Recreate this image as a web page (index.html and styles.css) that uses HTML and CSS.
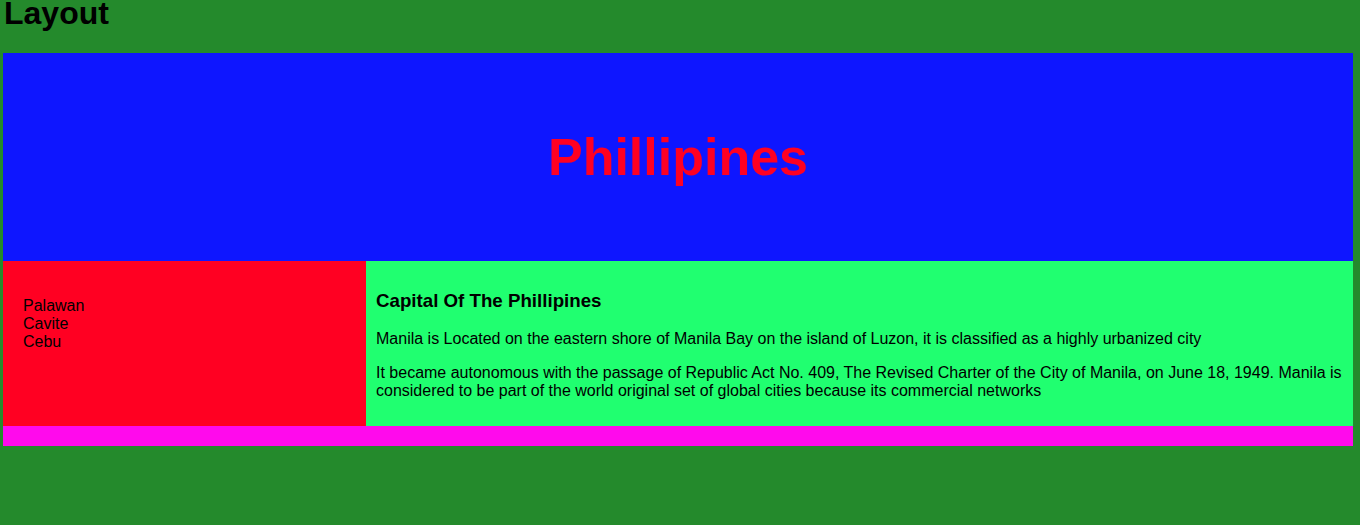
FILE: index.html
```html
<!DOCTYPE html>
<html>
<head>
<meta charset="utf-8">
<title>Layout</title>
<link rel="stylesheet" href="styles.css">
</head>
<body>
<h1 class="page-title">Layout</h1>
<div class="layout">
  <header class="hero"><h1 class="hero-title">Phillipines</h1></header>
  <aside class="side">
    <ul class="places">
      <li>Palawan</li>
      <li>Cavite</li>
      <li>Cebu</li>
    </ul>
  </aside>
  <main class="content">
    <h3 class="content-title">Capital Of The Phillipines</h3>
    <p>Manila is Located on the eastern shore of Manila Bay on the island of Luzon, it is classified as a highly urbanized city</p>
    <p>It became autonomous with the passage of Republic Act No. 409, The Revised Charter of the City of Manila, on June 18, 1949. Manila is considered to be part of the world original set of global cities because its commercial networks</p>
  </main>
  <footer class="foot"></footer>
</div>
</body>
</html>
```
FILE: styles.css
```css
html, body {
  background: #248a2c;
}
body {
  margin: 0 7px 0 3px;
  font-family: "Liberation Sans", Arial, sans-serif;
  font-size: 16px;
  color: #000;
}
.page-title {
  font-size: 32px;
  margin: -5px 0 21px 1px;
  line-height: 37px;
}
.layout {
  display: grid;
  grid-template-columns: 363px 1fr;
  grid-template-rows: 208px auto 20px;
}
.hero {
  grid-column: 1 / 3;
  background: #0e16ff;
  display: flex;
  align-items: center;
  justify-content: center;
}
.hero-title {
  margin: 0;
  font-size: 52px;
  color: #ff0022;
}
.side {
  background: #ff0022;
  padding: 20px;
}
.places {
  list-style: none;
  margin: 16px 0;
  padding: 0;
}
.content {
  background: #20ff70;
  padding: 10px;
}
.content-title {
  font-size: 18.72px;
  margin: 18.72px 0;
}
.content p {
  margin: 16px 0;
}
.foot {
  grid-column: 1 / 3;
  background: #ff0aec;
}
```
